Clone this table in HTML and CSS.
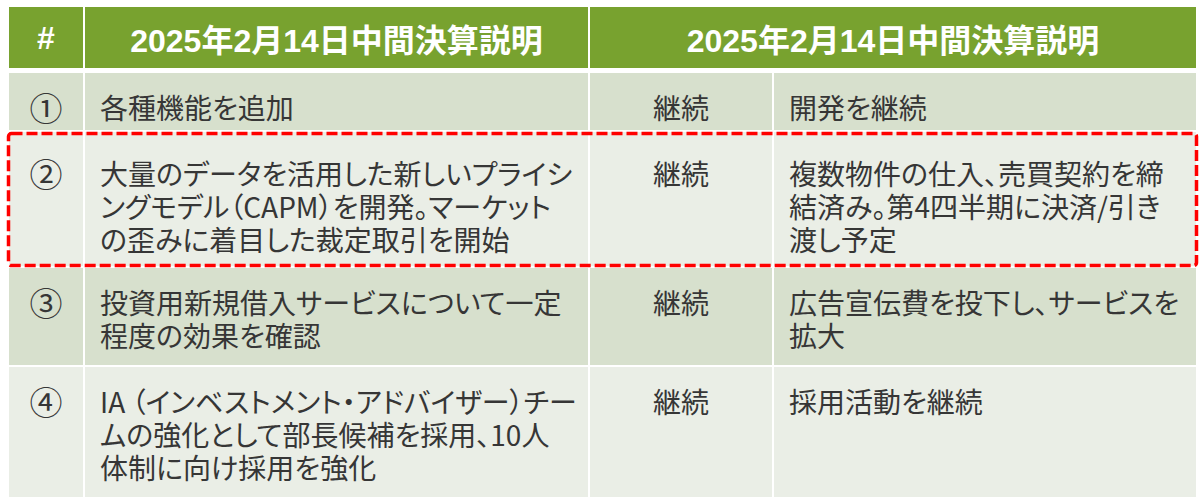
FILE: index.html
```html
<!DOCTYPE html>
<html lang="ja">
<head>
<meta charset="utf-8">
<link rel="stylesheet" href="styles.css">
</head>
<body>
<div class="table">
  <div class="hcell">#</div>
  <div class="hcell">2025年2月14日中間決算説明</div>
  <div class="hcell span2">2025年2月14日中間決算説明</div>

  <div class="cell num dark">①</div>
  <div class="cell dark">各種機能を追加</div>
  <div class="cell mid dark">継続</div>
  <div class="cell dark">開発を継続</div>

  <div class="cell num light r2 c1">②</div>
  <div class="cell light r2 c2">大量のデータを活用した新しいプライシ<br>ングモデル（CAPM）を開発。マーケット<br>の歪みに着目した裁定取引を開始</div>
  <div class="cell mid light r2 c3">継続</div>
  <div class="cell light r2 c4">複数物件の仕入、売買契約を締<br>結済み。第4四半期に決済/引き<br>渡し予定</div>
  <div class="highlight">
    <svg class="dash" xmlns="http://www.w3.org/2000/svg"><rect class="dash-rect" x="1.5" y="1.5" rx="3" ry="3"/></svg>
  </div>

  <div class="cell num dark">③</div>
  <div class="cell dark">投資用新規借入サービスについて一定<br>程度の効果を確認</div>
  <div class="cell mid dark">継続</div>
  <div class="cell dark">広告宣伝費を投下し、サービスを<br>拡大</div>

  <div class="cell num light">④</div>
  <div class="cell light">IA （インベストメント・アドバイザー）チー<br>ムの強化として部長候補を採用、10人<br>体制に向け採用を強化</div>
  <div class="cell mid light">継続</div>
  <div class="cell light">採用活動を継続</div>
</div>
</body>
</html>
```
FILE: styles.css
```css
html, body {
  margin: 0;
  padding: 0;
  background: #ffffff;
}
body {
  padding: 7px 0 0 9px;
  font-family: "Noto Sans CJK JP", "Noto Sans", sans-serif;
}
.table {
  display: grid;
  grid-template-columns: 74px 503px 182px 422px;
  grid-template-rows: 64px 57px 134px 97px 130px;
  column-gap: 2px;
  row-gap: 2px;
  width: 1187px;
}
.hcell {
  background: #78a22f;
  color: #ffffff;
  font-family: "Liberation Sans", "Noto Sans CJK JP", sans-serif;
  font-weight: bold;
  font-size: 32px;
  display: flex;
  align-items: center;
  justify-content: center;
  margin-bottom: 3px;
  padding-top: 1px;
}
.span2 {
  grid-column: 3 / 5;
}
.cell {
  color: #363636;
  font-size: 28px;
  line-height: 33px;
  padding: 18px 10px 0 15px;
  white-space: nowrap;
  font-feature-settings: "palt";
}
.dark {
  background: #d7e0cd;
}
.light {
  background: #eaeee6;
}
.num {
  text-align: center;
  padding-left: 0;
  padding-right: 0;
  font-size: 33px;
  font-feature-settings: normal;
}
.mid {
  text-align: center;
  padding-left: 0;
  padding-right: 0;
}
.r2 {
  grid-row: 3;
  padding-top: 25px;
}
.c1 { grid-column: 1; }
.c2 { grid-column: 2; }
.c3 { grid-column: 3; }
.c4 { grid-column: 4; }
.highlight {
  grid-row: 3;
  grid-column: 1 / -1;
  margin: 0 -2px -1px -2px;
  pointer-events: none;
  z-index: 2;
}
.dash {
  display: block;
  width: 100%;
  height: 100%;
  overflow: visible;
}
.dash-rect {
  width: calc(100% - 3px);
  height: calc(100% - 3px);
  fill: none;
  stroke: #ff0000;
  stroke-width: 3.5;
  stroke-dasharray: 11 4;
}
```
